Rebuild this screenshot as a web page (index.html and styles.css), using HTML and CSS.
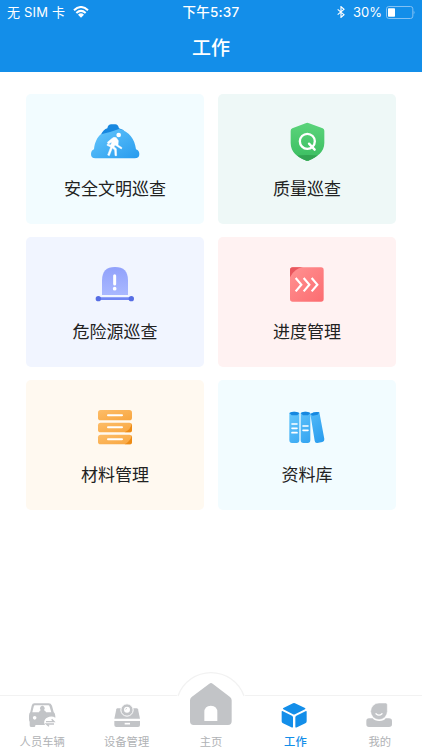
FILE: index.html
```html
<!DOCTYPE html>
<html lang="zh-CN">
<head>
    <meta charset="UTF-8">
    <meta name="viewport" content="width=device-width, initial-scale=1.0">
    <title>工作</title>
    <link rel="stylesheet" href="styles.css">
</head>
<body>
    <div class="app">
        <header class="header">
            <div class="status">
                <div class="status-left">
                    <span>无 SIM 卡</span>
                    <svg class="wifi" viewBox="0 0 48 36">
                        <path d="M3 13Q24-7 45 13M10 21Q24 8 38 21" fill="none" stroke="#fff" stroke-width="6"/>
                        <path d="M15 26Q24 18 33 26L24 35Z" fill="#fff"/>
                    </svg>
                </div>
                <div class="status-time">下午5:37</div>
                <div class="status-right">
                    <svg class="bluetooth" viewBox="0 0 24 36">
                        <path d="M2 10L21 26L12 34V2L21 10L2 26" fill="none" stroke="#fff" stroke-width="3.5"/>
                    </svg>
                    <span>30%</span>
                    <svg class="battery" viewBox="0 0 90 39">
                        <rect x="4.5" y="1.5" width="79" height="36" rx="7" fill="none" stroke="#83c1f4" stroke-width="3"/>
                        <rect x="9" y="7" width="21" height="25" rx="2" fill="#fff"/>
                        <path d="M86 14Q91 19 86 25Z" fill="#83c1f4"/>
                    </svg>
                </div>
            </div>
            <h1>工作</h1>
        </header>

        <main class="grid">
            <a class="card safety">
                <svg class="icon" viewBox="0 0 210 165">
                    <defs>
                        <linearGradient id="blue" x1="0" y1="0" x2="1" y2="1">
                            <stop offset="0" stop-color="#66c7fc"/>
                            <stop offset="1" stop-color="#279bee"/>
                        </linearGradient>
                    </defs>
                    <path d="M62 60Q70 43 82 40Q84 28 94 28H106Q114 28 117 40L132 46L110 62Z" fill="#1788e0"/>
                    <path d="M42 103C44 82 52 66 63 58Q88 53 117 42C148 49 164 72 168 103Q178 107 178 117Q178 130 164 130H46Q33 130 33 117Q33 107 42 103Z" fill="url(#blue)"/>
                    <circle cx="116" cy="60" r="7" fill="#fff"/>
                    <path d="M109 68Q102 65 95 71L82 82L85 87L96 81L92 90L82 87L81 91L92 96L83 120L88 122L97 99L104 105L105 122H110L109 101L102 95L105 90L124 102L126 98L114 90L115 77Z" fill="#fff" stroke="#fff" stroke-width="1.5"/>
                </svg>
                <span>安全文明巡查</span>
            </a>
            <a class="card quality">
                <svg class="icon" viewBox="-9 0 210 165">
                    <defs>
                        <linearGradient id="green" x1="0" y1="0" x2="0" y2="1">
                            <stop offset="0" stop-color="#5bd47b"/>
                            <stop offset="1" stop-color="#3abd60"/>
                        </linearGradient>
                        <clipPath id="shield">
                            <path d="M92 25Q97 22 102 25L143 40Q148 42 148 47V84C148 112 125 126 103 136Q97 139 91 136C68 126 47 112 47 84V47Q47 42 52 40Z"/>
                        </clipPath>
                    </defs>
                    <path d="M92 25Q97 22 102 25L143 40Q148 42 148 47V84C148 112 125 126 103 136Q97 139 91 136C68 126 47 112 47 84V47Q47 42 52 40Z" fill="url(#green)"/>
                    <path d="M60 122Q97 118 135 122V142H60Z" fill="#32a452" clip-path="url(#shield)"/>
                    <circle cx="97" cy="79" r="22.5" fill="none" stroke="#fff" stroke-width="7"/>
                    <path d="M102 86L119 104" stroke="#fff" stroke-width="7" stroke-linecap="round"/>
                </svg>
                <span>质量巡查</span>
            </a>
            <a class="card danger">
                <svg class="icon" viewBox="0 0 210 165">
                    <defs>
                        <linearGradient id="violet" x1="0" y1="0" x2="0" y2="1">
                            <stop offset="0" stop-color="#91a1fb"/>
                            <stop offset="1" stop-color="#a9b8ff"/>
                        </linearGradient>
                    </defs>
                    <path d="M66 111V67Q66 27 105 27Q144 27 144 67V111Z" fill="url(#violet)"/>
                    <path d="M104 53V78" stroke="#fff" stroke-width="9" stroke-linecap="round"/>
                    <circle cx="104" cy="92" r="5.5" fill="#fff"/>
                    <path d="M55 122H154" stroke="#7186f3" stroke-width="8"/>
                    <circle cx="55" cy="122" r="8" fill="#566de4"/>
                    <circle cx="154" cy="122" r="8" fill="#566de4"/>
                </svg>
                <span>危险源巡查</span>
            </a>
            <a class="card progress">
                <svg class="icon" viewBox="-9 0 210 165">
                    <defs>
                        <linearGradient id="red" x1="0" y1="0" x2="1" y2="1">
                            <stop offset="0" stop-color="#ff9292"/>
                            <stop offset="1" stop-color="#fc6c70"/>
                        </linearGradient>
                    </defs>
                    <rect x="45" y="28" width="101" height="103" rx="8" fill="url(#red)"/>
                    <path d="M45 58V36Q45 28 53 28H84Q57 32 45 58Z" fill="#e9575e"/>
                    <path d="M62 60L79 80L62 100M86 60L103 80L86 100M110 60L127 80L110 100" fill="none" stroke="#fff" stroke-width="6.5"/>
                </svg>
                <span>进度管理</span>
            </a>
            <a class="card material">
                <svg class="icon" viewBox="0 3 210 165">
                    <defs>
                        <linearGradient id="orange" x1="0" y1="0" x2="1" y2="1">
                            <stop offset="0" stop-color="#fdbd68"/>
                            <stop offset="1" stop-color="#f8a640"/>
                        </linearGradient>
                    </defs>
                    <rect x="54" y="30" width="102" height="31" rx="8" fill="url(#orange)"/>
                    <rect x="54" y="68" width="102" height="29" rx="8" fill="url(#orange)"/>
                    <rect x="54" y="104" width="102" height="29" rx="8" fill="url(#orange)"/>
                    <path d="M156 70V89Q156 97 148 97H134Q152 90 156 70ZM134 133Q152 124 156 105V125Q156 133 148 133Z" fill="#ed8b15"/>
                    <path d="M84 46H126M84 82H126M84 118H126" stroke="#fff" stroke-width="6" stroke-linecap="round"/>
                </svg>
                <span>材料管理</span>
            </a>
            <a class="card library">
                <svg class="icon" viewBox="-9 3 210 165">
                    <path d="M43 39Q57 32 73 39V120Q73 129 65 129H51Q43 129 43 120ZM77 39Q91 32 106 39V120Q106 129 98 129H85Q77 129 77 120ZM106 42Q118 34 133 37L148 117Q149 124 142 126L127 129Q120 130 119 122Z" fill="url(#blue)"/>
                    <path d="M43 39Q57 32 73 39L67 46H50ZM77 39Q91 32 106 39L99 46H84ZM106 42Q118 34 133 37L128 44L113 47Z" fill="#1788e0"/>
                    <path d="M51 72H66M51 85H66M51 98H66M84 78H99M84 91H99" stroke="#fff" stroke-width="5" stroke-linecap="round"/>
                </svg>
                <span>资料库</span>
            </a>
        </main>

        <nav class="tabbar">
            <svg class="bump" viewBox="0 0 70 26">
                <path d="M0.5 26A35 35 0 0 1 69.5 26Z" fill="#fff"/>
                <path d="M2 25A35 35 0 0 1 68 25" fill="none" stroke="#f2f2f2" stroke-width="1.3"/>
            </svg>
            <a class="tab">
                <svg class="tab-icon" viewBox="84 111 84 84">
                    <path fill-rule="evenodd" d="M103 115H146Q153 115 156 122L161 141Q166 145 166 154V158Q159 153 148 155Q136 158 133 168Q131 174 135 180H106V182Q106 186 102 186H93Q89 186 89 181V170Q87 168 87 162V152Q87 145 91 141L95 122Q97 115 103 115ZM105 121Q102 121 101 125L97 142H117Q118 137 122 136A7 8 0 1 1 132 136Q137 137 138 142H154L149 125Q148 121 145 121ZM104 153A5.5 5.5 0 1 0 104 164A5.5 5.5 0 1 0 104 153Z" fill="currentColor"/>
                    <path d="M138 170H162L155 163M162 177H139L147 184" fill="none" stroke="currentColor" stroke-width="4"/>
                </svg>
                <span>人员车辆</span>
            </a>
            <a class="tab">
                <svg class="tab-icon" viewBox="338 111 84 84">
                    <path d="M351 130H409Q412 130 413 133L419 161H342L348 133Q349 130 351 130Z" fill="currentColor"/>
                    <circle cx="380" cy="135" r="18.5" fill="currentColor" stroke="#fff" stroke-width="3"/>
                    <circle cx="380" cy="134" r="9" fill="#fff"/>
                    <path d="M376 134Q376 130 380 130" fill="none" stroke="currentColor" stroke-width="2"/>
                    <path d="M342 168H419V180Q419 186 413 186H348Q342 186 342 180Z" fill="currentColor"/>
                    <path d="M373 176H389" stroke="#fff" stroke-width="5"/>
                </svg>
                <span>设备管理</span>
            </a>
            <a class="tab home">
                <svg class="home-icon" viewBox="117 51 132 132">
                    <path fill-rule="evenodd" d="M178 56Q183 52 188 56L240 96Q245 100 245 106V169Q245 180 234 180H131Q120 180 120 169V106Q120 100 125 96ZM163 168H202V142Q202 122 182.5 122Q163 122 163 142Z" fill="currentColor"/>
                </svg>
                <span>主页</span>
            </a>
            <a class="tab active">
                <svg class="tab-icon" viewBox="49 111 84 84">
                    <path d="M85 115Q88 113 91 115L121 129Q124 131 121 133L91 148Q88 149 85 148L56 133Q53 131 56 129ZM53 138L82 152Q85 154 85 157V186Q84 189 80 187L55 175Q51 173 51 169V140Q51 137 53 138ZM124 138Q126 137 126 141V169Q126 173 122 175L97 187Q92 189 92 185V157Q92 154 95 152Z" fill="currentColor"/>
                </svg>
                <span>工作</span>
            </a>
            <a class="tab">
                <svg class="tab-icon" viewBox="302 111 84 84">
                    <path d="M303 168Q303 160 311 160H322Q328 168 342 168Q356 168 361 160H371Q380 160 380 168V178Q380 186 371 186H311Q303 186 303 178Z" fill="currentColor"/>
                    <path d="M341 114H361Q366 114 366 119V139A25 25 0 1 1 341 114Z" fill="currentColor" stroke="#fff" stroke-width="1.5"/>
                    <path d="M332 146Q341 155 350 146" fill="none" stroke="#fff" stroke-width="4" stroke-linecap="round"/>
                </svg>
                <span>我的</span>
            </a>
        </nav>
    </div>
</body>
</html>
```
FILE: styles.css
```css
* {
    box-sizing: border-box;
}
body {
    margin: 0;
    background: #fff;
    font-family: "Inter", "Noto Sans CJK SC", sans-serif;
}
.app {
    display: flex;
    flex-direction: column;
    height: 750px;
    max-width: 422px;
}
.header {
    height: 72px;
    background: #138ee9;
    color: #fff;
}
.status {
    display: grid;
    grid-template-columns: 1fr auto 1fr;
    align-items: center;
    height: 24px;
    padding: 0 7px;
    font-size: 13px;
    line-height: 24px;
}
.status-left,
.status-right {
    display: flex;
    align-items: center;
}
.status-left {
    gap: 8px;
    font-size: 13px;
    letter-spacing: 0.2px;
}
.status-right {
    justify-content: flex-end;
    gap: 3px;
}
.status-time {
    font-size: 13.5px;
    font-weight: 500;
    letter-spacing: 0.2px;
}
.wifi {
    width: 16px;
    height: 12px;
}
.bluetooth {
    width: 8px;
    height: 12px;
    margin-right: 5px;
}
.battery {
    width: 30px;
    height: 13px;
}
.header h1 {
    margin: 0;
    font-size: 19px;
    font-weight: 500;
    line-height: 48px;
    padding-top: 1px;
    text-align: center;
}
.grid {
    display: grid;
    grid-template-columns: 178px 178px;
    grid-auto-rows: 129.5px;
    align-content: start;
    gap: 13.5px 14px;
    padding: 22px 26px 0;
    flex: 1;
}
.card {
    display: flex;
    flex-direction: column;
    align-items: center;
    padding-top: 21px;
    border-radius: 5px;
    color: #222;
    font-size: 17px;
    line-height: 24px;
}
.icon {
    width: 70px;
    height: 55px;
    margin-bottom: 7px;
}
.safety,
.library {
    background: #f2fcff;
}
.quality {
    background: #eef8f7;
}
.danger {
    background: #f1f5ff;
}
.progress {
    background: #fff2f2;
}
.material {
    background: #fff9f0;
}
.tabbar {
    position: relative;
    display: grid;
    grid-template-columns: repeat(5, 1fr);
    height: 55px;
    border-top: 1px solid #f2f2f2;
}
.bump {
    position: absolute;
    left: 176px;
    top: -25px;
    width: 70px;
    height: 26px;
}
.tab {
    display: flex;
    flex-direction: column;
    align-items: center;
    padding-top: 6px;
    color: #c2c4c7;
    font-size: 11.3px;
    line-height: 16px;
}
.tab span {
    margin-top: 4px;
    color: #b0b2b5;
}
.tab-icon {
    width: 28px;
    height: 28px;
    flex: none;
}
.home {
    position: relative;
    padding-top: 0;
}
.home-icon {
    width: 44px;
    height: 44px;
    margin-top: -14px;
    flex: none;
}
.home span {
    margin-top: 8px;
}
.active,
.active span {
    color: #138ee9;
    font-weight: 500;
}
```
